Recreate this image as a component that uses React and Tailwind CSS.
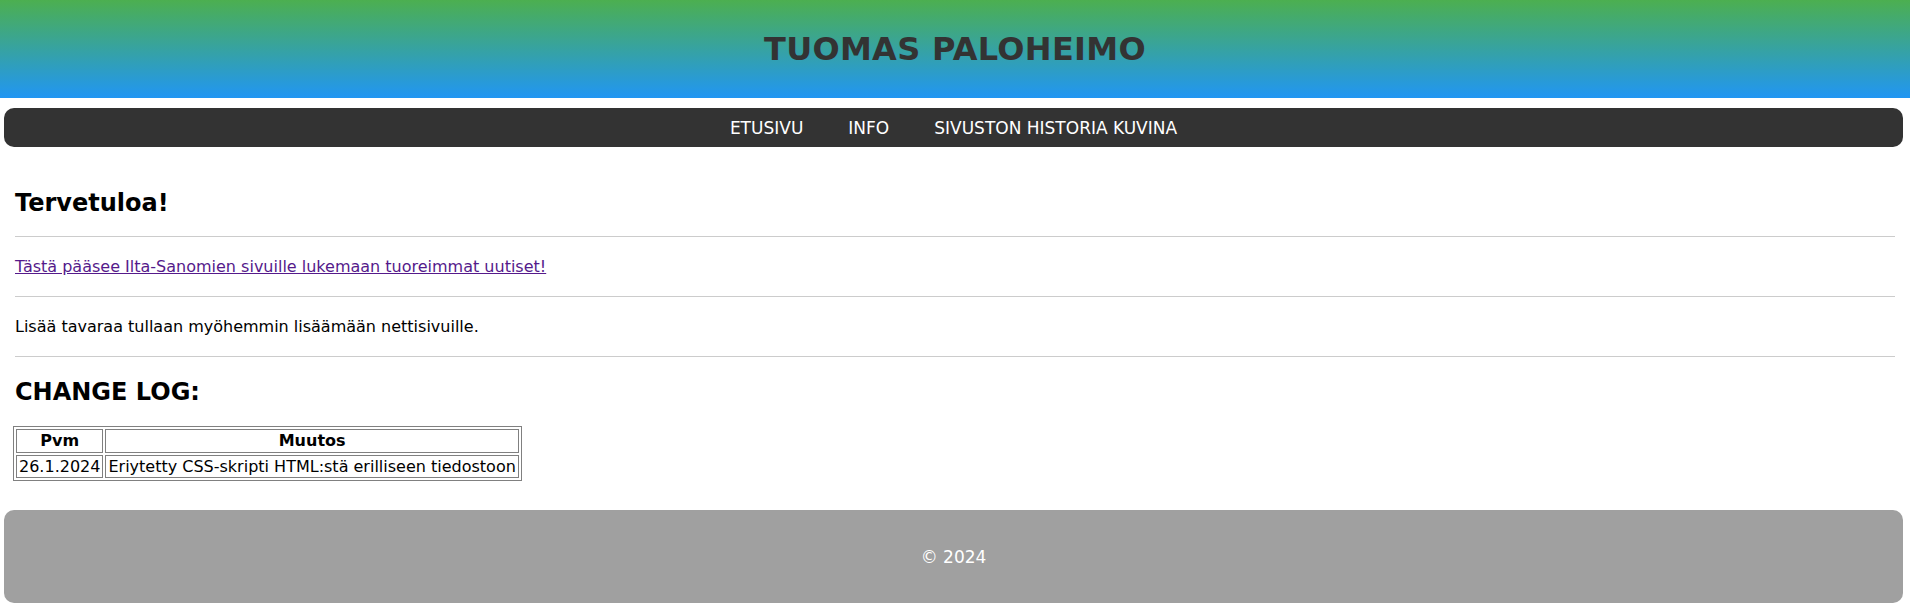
export default function App() {
  const body = { fontFamily: '"DejaVu Sans", Verdana, sans-serif' };
  return (
    <div className="w-[1910px] h-[616px] bg-white text-black" style={body}>
      <header className="h-[98px] flex items-center justify-center bg-[linear-gradient(#4CAF50,#2196F3)]">
        <h1 className="text-[32px] font-bold text-[#333] leading-none tracking-[0.3px]">TUOMAS PALOHEIMO</h1>
      </header>
      <nav className="mt-[10px] ml-[4px] mr-[7px] h-[39px] pt-[2px] rounded-[10px] bg-[#333] flex items-center justify-center gap-[45px] text-white text-[17px]">
        <a>ETUSIVU</a>
        <a>INFO</a>
        <a>SIVUSTON HISTORIA KUVINA</a>
      </nav>
      <main className="px-[15px]">
        <h2 className="mt-[41px] text-[24px] font-bold leading-[30px]">Tervetuloa!</h2>
        <hr className="mt-[18px] border-0 h-px bg-[#ccc]" />
        <p className="mt-[20px] leading-[20px] text-[16px]">
          <a className="text-[#551A8B] underline">Tästä pääsee Ilta-Sanomien sivuille lukemaan tuoreimmat uutiset!</a>
        </p>
        <hr className="mt-[19px] border-0 h-px bg-[#ccc]" />
        <p className="mt-[20px] leading-[20px] text-[16px]">Lisää tavaraa tullaan myöhemmin lisäämään nettisivuille.</p>
        <hr className="mt-[19px] border-0 h-px bg-[#ccc]" />
        <h2 className="mt-[20px] text-[24px] font-bold leading-[30px]">CHANGE LOG:</h2>
        <table className="mt-[19px] -ml-[2px] border-separate border-spacing-[2px] border border-[#808080] text-[16px]">
          <thead>
            <tr>
              <th className="border border-[#808080] px-[2px] py-[1px] leading-[20px] font-bold">Pvm</th>
              <th className="border border-[#808080] px-[2px] py-[1px] leading-[20px] font-bold">Muutos</th>
            </tr>
          </thead>
          <tbody>
            <tr>
              <td className="border border-[#808080] px-[2px] py-[1px] leading-[19px]">26.1.2024</td>
              <td className="border border-[#808080] px-[2px] py-[1px] leading-[19px]">Eriytetty CSS-skripti HTML:stä erilliseen tiedostoon</td>
            </tr>
          </tbody>
        </table>
      </main>
      <footer className="mt-[29px] ml-[4px] mr-[7px] h-[93px] pt-[3px] rounded-[10px] bg-[#a0a0a0] flex items-center justify-center text-white text-[17px]">
        © 2024
      </footer>
    </div>
  );
}
